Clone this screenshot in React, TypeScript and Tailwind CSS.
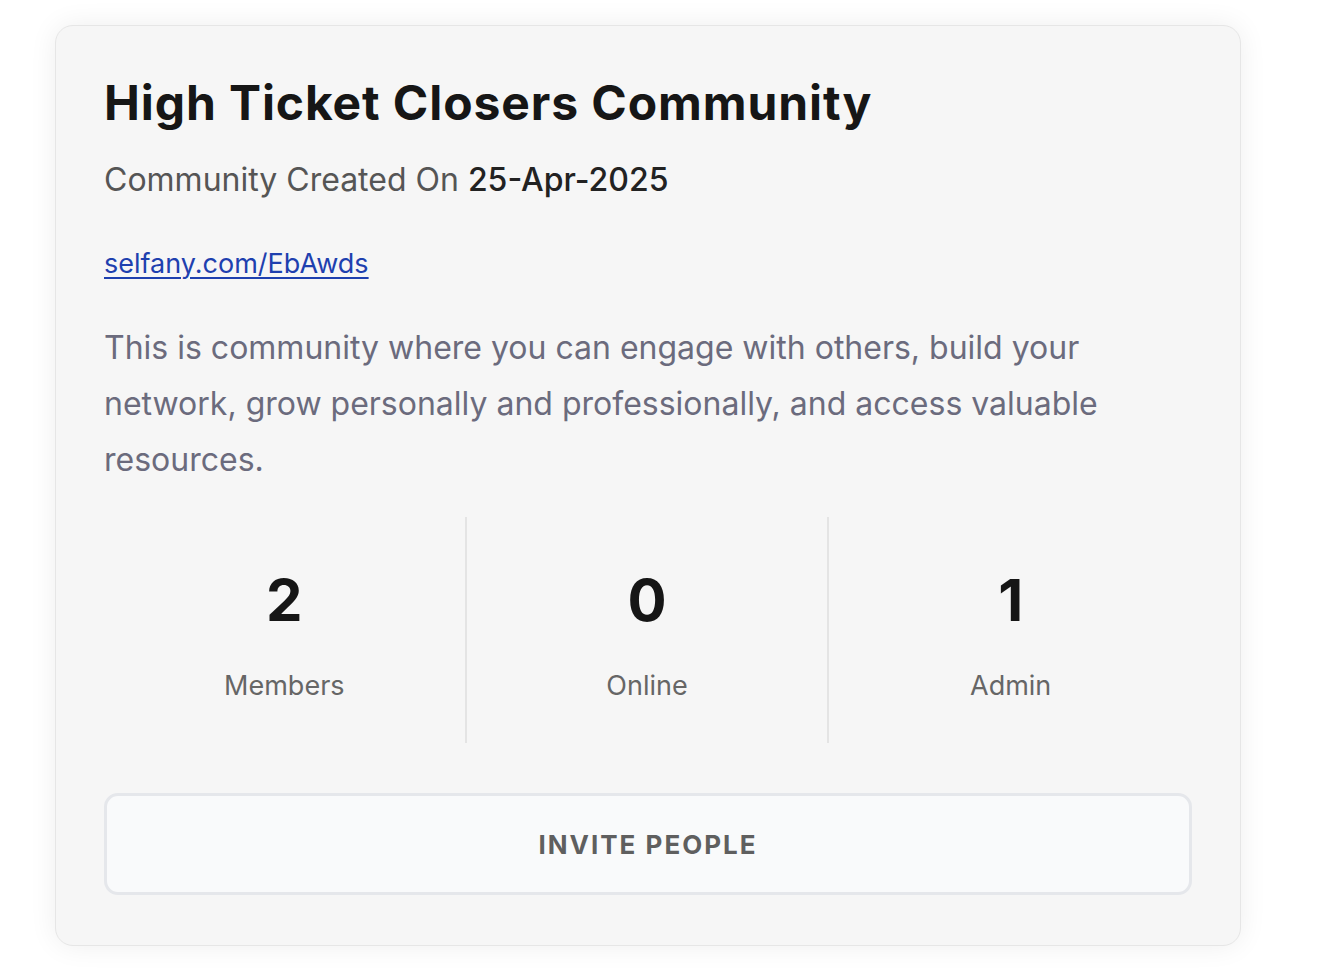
export default function App() {
  const stats = [
    { value: "2", label: "Members" },
    { value: "0", label: "Online" },
    { value: "1", label: "Admin" },
  ];

  return (
    <div className="min-h-screen bg-white pt-[25px] pl-[55px] font-['Inter',sans-serif]">
      <div className="w-[1186px] rounded-[18px] border border-[#e6e6e6] bg-[#f6f6f6] px-[48px] pt-[53px] pb-[50px] shadow-[0_0_28px_rgba(0,0,0,0.07)]">
        <h1 className="text-[48px] leading-none font-bold text-[#161616] tracking-[0.9px]">
          High Ticket Closers Community
        </h1>
        <p className="mt-[37px] text-[32px] leading-none text-[#555555]">
          Community Created On <span className="font-medium text-[#222222]">25-Apr-2025</span>
        </p>
        <a
          href="#"
          className="mt-[54px] inline-block text-[27px] leading-none text-[#1e40af] underline underline-offset-[4px] decoration-[2px]"
        >
          selfany.com/EbAwds
        </a>
        <p className="mt-[41px] max-w-[1040px] text-[32px] leading-[56px] text-[#6b6b7d]">
          This is community where you can engage with others, build your network, grow personally and
          professionally, and access valuable resources.
        </p>

        <div className="mt-[29px] grid grid-cols-3">
          {stats.map((s, i) => (
            <div
              key={s.label}
              className={`flex flex-col items-center pt-[54px] pb-[44px] ${
                i < 2 ? "border-r-2 border-[#e4e4e4]" : ""
              }`}
            >
              <span className="text-[58px] leading-none font-bold text-[#161616]">{s.value}</span>
              <span className="mt-[43px] text-[27px] leading-none text-[#666666]">{s.label}</span>
            </div>
          ))}
        </div>

        <button className="mt-[50px] flex h-[102px] w-full items-center justify-center rounded-[14px] border-[3px] border-[#e5e7eb] bg-[#f9fafb] text-[26px] font-bold tracking-[2px] text-[#5f5f5f]">
          INVITE PEOPLE
        </button>
      </div>
    </div>
  );
}
